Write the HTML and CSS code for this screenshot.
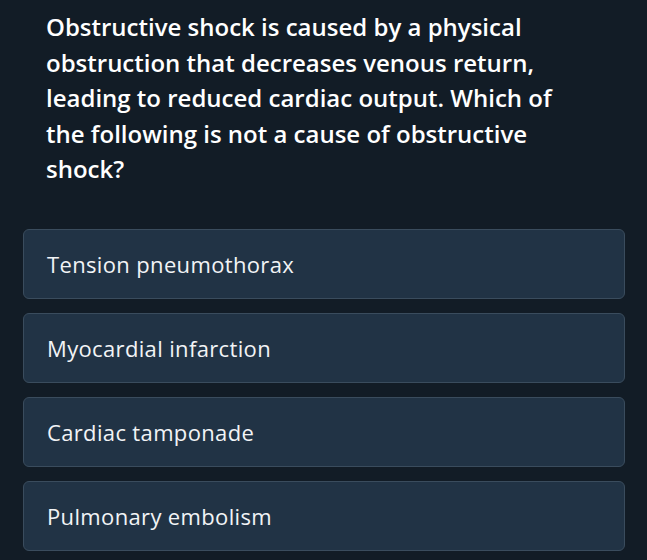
FILE: index.html
```html
<!DOCTYPE html>
<html>
<head>
<meta charset="utf-8">
<link rel="stylesheet" href="styles.css">
</head>
<body>
<div class="page">
  <h1 class="question">Obstructive shock is caused by a physical<br>obstruction that decreases venous return,<br>leading to reduced cardiac output. Which of<br>the following is not a cause of obstructive<br>shock?</h1>
  <div class="options">
    <div class="option">Tension pneumothorax</div>
    <div class="option">Myocardial infarction</div>
    <div class="option">Cardiac tamponade</div>
    <div class="option">Pulmonary embolism</div>
  </div>
</div>
</body>
</html>
```
FILE: styles.css
```css
html, body {
  margin: 0;
  padding: 0;
  background: #121c26;
}
body {
  font-family: "Open Sans", Lato, sans-serif;
  color: #ffffff;
  width: 647px;
  height: 560px;
  overflow: hidden;
}
.page {
  padding: 9px 22px 0 23px;
}
.question {
  margin: 0 0 0 23px;
  font-size: 24px;
  font-weight: 600;
  line-height: 35.5px;
  white-space: nowrap;
}
.options {
  margin-top: 42px;
  display: flex;
  flex-direction: column;
  gap: 14px;
}
.option {
  height: 68px;
  box-sizing: content-box;
  border: 1px solid #3a4c5d;
  border-radius: 6px;
  background: #213345;
  display: flex;
  align-items: center;
  padding-left: 23px;
  font-size: 22px;
  letter-spacing: 0.35px;
  color: #f2f4f6;
}
```
